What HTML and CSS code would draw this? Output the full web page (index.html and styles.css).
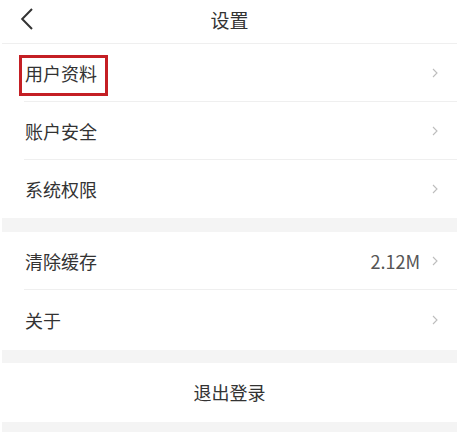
FILE: index.html
```html
<!DOCTYPE html>
<html lang="zh-CN">
<head>
<meta charset="utf-8">
<title>设置</title>
<link rel="stylesheet" href="styles.css">
</head>
<body>
<div class="page">
  <header class="topbar">
    <span class="back">
      <svg width="14" height="22" viewBox="0 0 14 22"><polyline points="12,1 2.2,11 12,21" fill="none" stroke="#333" stroke-width="2" stroke-linejoin="miter"/></svg>
    </span>
    <h1 class="title">设置</h1>
  </header>

  <section class="group">
    <div class="row">
      <span class="label marked">用户资料</span>
      <span class="chev"><svg width="6" height="10" viewBox="0 0 6 10"><polyline points="1,1 5,5 1,9" fill="none" stroke="#bdbdbd" stroke-width="1.1"/></svg></span>
    </div>
    <div class="row">
      <span class="label">账户安全</span>
      <span class="chev"><svg width="6" height="10" viewBox="0 0 6 10"><polyline points="1,1 5,5 1,9" fill="none" stroke="#bdbdbd" stroke-width="1.1"/></svg></span>
    </div>
    <div class="row">
      <span class="label">系统权限</span>
      <span class="chev"><svg width="6" height="10" viewBox="0 0 6 10"><polyline points="1,1 5,5 1,9" fill="none" stroke="#bdbdbd" stroke-width="1.1"/></svg></span>
    </div>
  </section>

  <div class="gap g1"></div>

  <section class="group">
    <div class="row">
      <span class="label">清除缓存</span>
      <span class="value">2.12M</span>
      <span class="chev"><svg width="6" height="10" viewBox="0 0 6 10"><polyline points="1,1 5,5 1,9" fill="none" stroke="#bdbdbd" stroke-width="1.1"/></svg></span>
    </div>
    <div class="row tall">
      <span class="label">关于</span>
      <span class="chev"><svg width="6" height="10" viewBox="0 0 6 10"><polyline points="1,1 5,5 1,9" fill="none" stroke="#bdbdbd" stroke-width="1.1"/></svg></span>
    </div>
  </section>

  <div class="gap g2"></div>

  <section class="group">
    <div class="logout">退出登录</div>
  </section>

  <div class="gap g3"></div>
</div>
</body>
</html>
```

FILE: styles.css
```css
html, body {
  margin: 0;
  padding: 0;
  background: #ffffff;
}

body {
  font-family: "Noto Sans CJK SC", "Noto Sans", sans-serif;
  color: #333333;
}

.page {
  margin-left: 2px;
  width: 455px;
}

.topbar {
  height: 43px;
  border-bottom: 1px solid #efefef;
  display: flex;
  align-items: center;
  justify-content: center;
  position: relative;
}

.back {
  position: absolute;
  left: 18px;
  top: 8px;
  display: flex;
}

.title {
  margin: 0;
  font-size: 19px;
  font-weight: 400;
  line-height: 24px;
  color: #333333;
  padding-bottom: 4px;
}

.group {
  background: #ffffff;
}

.row {
  height: 57px;
  margin-left: 22px;
  padding-right: 19px;
  display: flex;
  align-items: center;
  border-bottom: 1px solid #efefef;
}

.row:last-child {
  border-bottom: none;
  height: 58px;
}

.row.tall {
  height: 60px;
}

.label {
  flex: 1;
  font-size: 18px;
  line-height: 24px;
  padding-left: 1px;
}

.label.marked {
  flex: none;
  position: relative;
}

.label.marked::after {
  content: "";
  position: absolute;
  left: -5px;
  right: -11px;
  top: -6px;
  bottom: -11px;
  border: 3px solid #c41f24;
}

.row .label.marked + .chev {
  margin-left: auto;
}

.value {
  font-size: 18px;
  line-height: 24px;
  color: #555555;
  margin-right: 12px;
}

.chev {
  display: flex;
  align-items: center;
}

.gap {
  background: #f4f4f4;
}

.g1 { height: 14px; }
.g2 { height: 13px; }
.g3 { height: 10px; }

.logout {
  height: 59px;
  display: flex;
  align-items: center;
  justify-content: center;
  font-size: 18px;
  color: #333333;
  padding-bottom: 2px;
  box-sizing: border-box;
}
```
